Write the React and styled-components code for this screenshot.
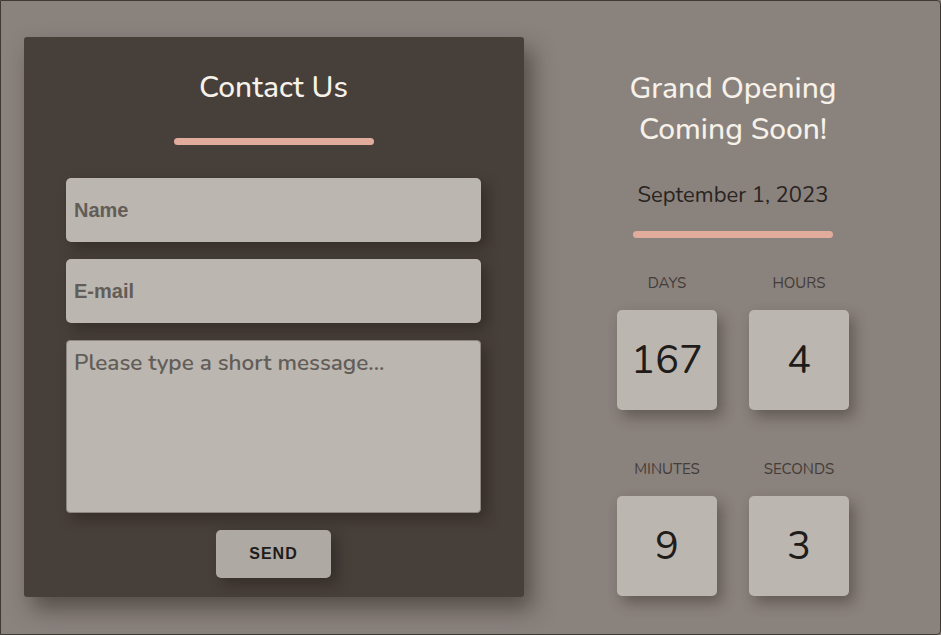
import React from 'react';
import styled, { createGlobalStyle } from 'styled-components';

const GlobalStyle = createGlobalStyle`
  html, body {
    margin: 0;
    padding: 0;
    background: #8a827d;
  }
  * { box-sizing: border-box; }
`;

const Page = styled.div`
  width: 941px;
  height: 635px;
  background: #8a827d;
  border: 1px solid #3f3934;
  border-radius: 0 4px 4px 0;
  padding: 36px 0 0 23px;
  display: flex;
  font-family: "Nunito", "Lato", sans-serif;
`;

const Card = styled.form`
  width: 500px;
  height: 560px;
  background: #473f3a;
  border-radius: 3px;
  box-shadow: 8px 12px 22px rgba(40, 34, 30, 0.55);
  padding: 33px 43px 18px 42px;
  display: flex;
  flex-direction: column;
  align-items: center;
`;

const Title = styled.h2`
  margin: 0;
  font-size: 30px;
  line-height: 36px;
  font-weight: 500;
  color: #f6f1e9;
`;

const Bar = styled.div`
  width: 200px;
  height: 7px;
  border-radius: 4px;
  background: #e1ac9c;
  flex-shrink: 0;
  margin: ${({ $top }) => $top}px 0 ${({ $bottom }) => $bottom}px;
`;

const Field = styled.input`
  width: 415px;
  height: 64px;
  flex-shrink: 0;
  border: none;
  outline: none;
  border-radius: 5px;
  background: #bbb6b0;
  padding: 0 8px;
  font-family: "Liberation Sans", Arial, sans-serif;
  font-weight: bold;
  font-size: 20px;
  color: #2b2725;
  margin-bottom: 17px;
  box-shadow: 6px 6px 14px rgba(30, 25, 22, 0.45);

  &::placeholder { color: #625d58; }
`;

const Message = styled.textarea`
  width: 415px;
  height: 173px;
  flex-shrink: 0;
  border: 1px solid #8c8580;
  outline: none;
  border-radius: 4px;
  background: #bbb6b0;
  padding: 6px 7px;
  resize: none;
  font-family: "Nunito", "Lato", sans-serif;
  font-size: 22.5px;
  font-weight: 600;
  color: #2b2725;
  margin-bottom: 17px;
  box-shadow: 6px 6px 14px rgba(30, 25, 22, 0.45);

  &::placeholder { color: #625d58; }
`;

const Send = styled.button`
  width: 115px;
  height: 48px;
  flex-shrink: 0;
  border: none;
  border-radius: 5px;
  background: #aea9a3;
  font-family: "Liberation Sans", Arial, sans-serif;
  font-weight: bold;
  font-size: 16px;
  letter-spacing: 1px;
  color: #1f1c1a;
  box-shadow: 6px 6px 14px rgba(30, 25, 22, 0.45);
`;

const Side = styled.div`
  flex: 1;
  display: flex;
  flex-direction: column;
  align-items: center;
  padding: 31px 0 0 2px;
`;

const Heading = styled.h1`
  margin: 0;
  font-size: 30px;
  line-height: 41px;
  font-weight: 500;
  color: #f6f1e9;
  text-align: center;
`;

const DateLine = styled.p`
  margin: 31px 0 0;
  font-size: 22px;
  line-height: 28px;
  color: #29241f;
`;

const Grid = styled.div`
  display: grid;
  grid-template-columns: 100px 100px;
  column-gap: 32px;
  row-gap: 49px;
`;

const Unit = styled.div`
  display: flex;
  flex-direction: column;
  align-items: center;
`;

const Label = styled.span`
  font-size: 15px;
  line-height: 20px;
  color: #433c37;
  margin-bottom: 17px;
  text-transform: uppercase;
`;

const Box = styled.div`
  width: 100px;
  height: 100px;
  border-radius: 5px;
  background: #bbb6b0;
  display: flex;
  align-items: center;
  justify-content: center;
  font-size: 40px;
  color: #1f1c1a;
  box-shadow: 5px 7px 14px rgba(50, 42, 38, 0.45);
`;

const countdown = [
  { label: 'Days', value: 167 },
  { label: 'Hours', value: 4 },
  { label: 'Minutes', value: 9 },
  { label: 'Seconds', value: 3 },
];

const App = () => {
  return (
    <>
      <GlobalStyle />
      <Page>
        <Card onSubmit={(e) => e.preventDefault()}>
          <Title>Contact Us</Title>
          <Bar $top={32} $bottom={33} />
          <Field type="text" placeholder="Name" />
          <Field type="email" placeholder="E-mail" />
          <Message placeholder="Please type a short message..." />
          <Send type="submit">SEND</Send>
        </Card>
        <Side>
          <Heading>
            Grand Opening
            <br />
            Coming Soon!
          </Heading>
          <DateLine>September 1, 2023</DateLine>
          <Bar $top={22} $bottom={35} />
          <Grid>
            {countdown.map((c) => (
              <Unit key={c.label}>
                <Label>{c.label}</Label>
                <Box>{c.value}</Box>
              </Unit>
            ))}
          </Grid>
        </Side>
      </Page>
    </>
  );
};

export default App;
